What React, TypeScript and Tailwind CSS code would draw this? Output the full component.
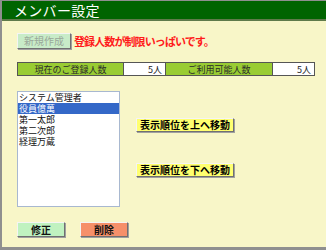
const members = ["システム管理者", "役員億萬", "第一太郎", "第二次郎", "経理万蔵"];

const btn =
  "flex items-center justify-center font-bold text-[10px] leading-none border border-t-[#f4f4f4] border-l-[#f4f4f4] border-r-[#707070] border-b-[#707070] shadow-[1px_1px_0_#a0a0a0]";

export default function App() {
  return (
    <div
      className="w-[326px] h-[250px] flex flex-col bg-[#f8f6c8] border-l-2 border-t border-b-[3px] border-[#8f8f8f] overflow-hidden"
      style={{ fontFamily: '"Noto Sans CJK JP", "Noto Sans", sans-serif' }}
    >
      <div className="h-[20px] bg-[#006400] border-b-2 border-[#5f7a4a] flex items-center pl-[12px]">
        <span className="text-white text-[14px] leading-none tracking-[0.3px]">メンバー設定</span>
      </div>

      <div className="flex flex-col pl-[15px]">
        <div className="flex items-center mt-[12px]">
          <button className={`${btn} w-[54px] h-[16px] bg-[#c8ecc8] text-[#9aa89a] font-normal`}>新規作成</button>
          <span className="ml-[3px] text-[#ff1a1a] font-bold text-[11px] leading-none tracking-[-0.9px]">
            登録人数が制限いっぱいです。
          </span>
        </div>

        <div className="flex mt-[13px] w-[298px] h-[14px] border border-[#555] text-[9px] leading-none">
          <div className="w-[105px] bg-[#99cc33] flex items-center justify-center text-[#2a2a2a]">現在のご登録人数</div>
          <div className="w-[43px] bg-white border-l border-r border-[#555] flex items-center justify-end pr-[3px] text-[#222]">5人</div>
          <div className="w-[106px] bg-[#99cc33] flex items-center justify-center text-[#2a2a2a]">ご利用可能人数</div>
          <div className="flex-1 bg-white border-l border-[#555] flex items-center justify-end pr-[3px] text-[#222]">5人</div>
        </div>

        <div className="flex mt-[15px]">
          <div className="w-[103px] h-[116px] bg-white border border-[#a8b8d0] flex flex-col text-[9px] leading-none text-[#111]">
            {members.map((m, i) => (
              <div
                key={m}
                className={
                  i === 1
                    ? "h-[11px] flex items-center bg-[#3468c8] text-white pl-[1px]"
                    : "h-[11px] flex items-center pl-[1px]"
                }
              >
                {m}
              </div>
            ))}
          </div>
          <div className="flex flex-col ml-[16px] pt-[27px] gap-[31px]">
            <button className={`${btn} w-[98px] h-[14px] bg-[#ffff70] text-black`}>表示順位を上へ移動</button>
            <button className={`${btn} w-[98px] h-[14px] bg-[#ffff70] text-black`}>表示順位を下へ移動</button>
          </div>
        </div>

        <div className="flex mt-[15px] gap-[15px]">
          <button className={`${btn} w-[48px] h-[15px] bg-[#c0f2c0] text-[#111]`}>修正</button>
          <button className={`${btn} w-[48px] h-[15px] bg-[#f6906a] text-[#111]`}>削除</button>
        </div>
      </div>
    </div>
  );
}
